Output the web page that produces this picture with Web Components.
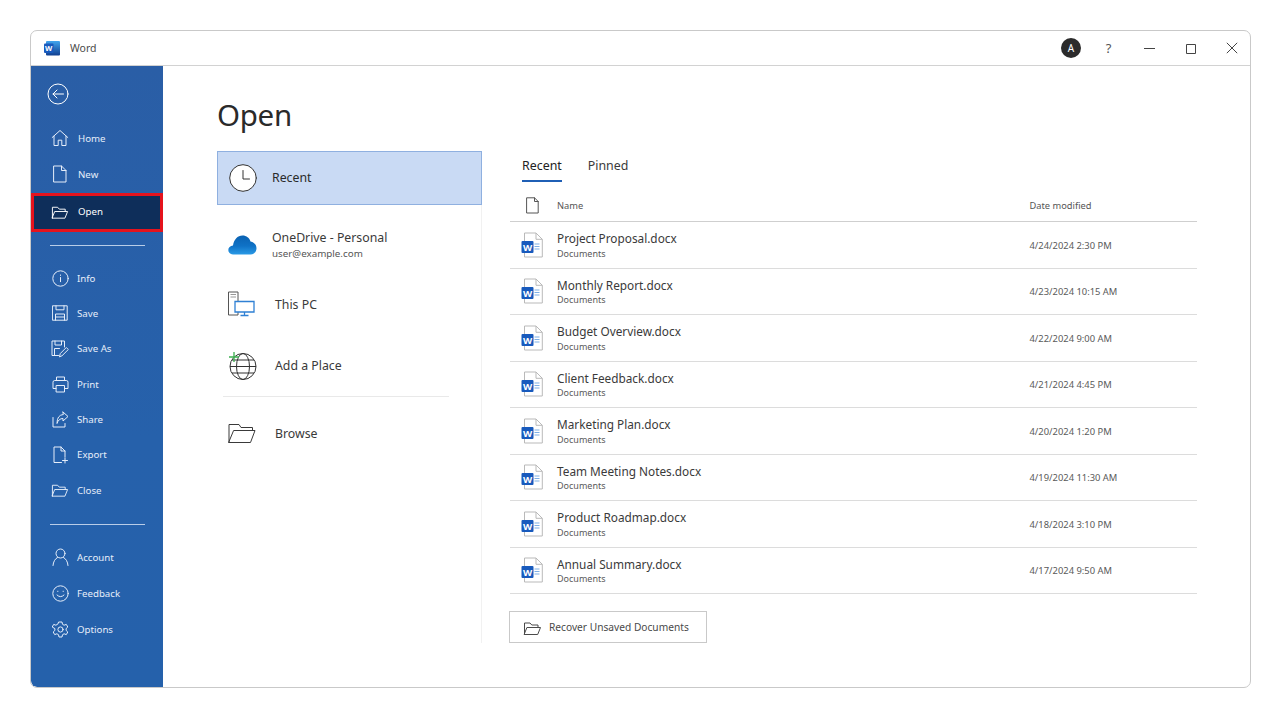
<!DOCTYPE html>
<html lang="en"><head><meta charset="utf-8"><title>Word - Open</title>
<style>
html,body{margin:0;padding:0;background:#fff;height:100%;overflow:hidden}
body{font-family:"Noto Sans","Open Sans",sans-serif;color:#222;padding:30px 30px 0 30px;box-sizing:border-box}
</style></head><body>
<word-window>
  <title-bar slot="top"></title-bar>
  <side-nav slot="side">
    <nav-item icon="home">Home</nav-item>
    <nav-item icon="new">New</nav-item>
    <nav-item icon="folder" active>Open</nav-item>
    <nav-rule></nav-rule>
    <nav-item icon="info" tight>Info</nav-item>
    <nav-item icon="save" tight>Save</nav-item>
    <nav-item icon="saveas" tight>Save As</nav-item>
    <nav-item icon="print" tight>Print</nav-item>
    <nav-item icon="share" tight>Share</nav-item>
    <nav-item icon="export" tight>Export</nav-item>
    <nav-item icon="folder" tight>Close</nav-item>
    <nav-rule style="margin-top:16px"></nav-rule>
    <nav-item icon="account" tight2>Account</nav-item>
    <nav-item icon="smile" tight2>Feedback</nav-item>
    <nav-item icon="gear" tight2>Options</nav-item>
  </side-nav>
  <open-pane slot="main">
    <place-list slot="places">
      <place-item icon="clock" selected>Recent</place-item>
      <place-item icon="cloud" sub="user@example.com" style="height:78px;padding-top:1px">OneDrive - Personal</place-item>
      <place-item icon="pc" shift style="height:42px">This PC</place-item>
      <place-item icon="globe" shift style="height:71px;padding-top:10px">Add a Place</place-item>
      <place-rule></place-rule>
      <place-item icon="browse" shift style="height:72px">Browse</place-item>
    </place-list>
    <file-panel slot="files">
      <file-row name="Project Proposal.docx" date="4/24/2024 2:30 PM"></file-row>
      <file-row name="Monthly Report.docx" date="4/23/2024 10:15 AM"></file-row>
      <file-row name="Budget Overview.docx" date="4/22/2024 9:00 AM"></file-row>
      <file-row name="Client Feedback.docx" date="4/21/2024 4:45 PM"></file-row>
      <file-row name="Marketing Plan.docx" date="4/20/2024 1:20 PM"></file-row>
      <file-row name="Team Meeting Notes.docx" date="4/19/2024 11:30 AM"></file-row>
      <file-row name="Product Roadmap.docx" date="4/18/2024 3:10 PM"></file-row>
      <file-row name="Annual Summary.docx" date="4/17/2024 9:50 AM"></file-row>
    </file-panel>
  </open-pane>
</word-window>
<script>
const S=(w,h,vb,body)=>`<svg xmlns="http://www.w3.org/2000/svg" width="${w}" height="${h}" viewBox="${vb}" fill="none" stroke="currentColor" stroke-width="1" stroke-linecap="round" stroke-linejoin="round" aria-hidden="true">${body}</svg>`;
const folderP='<path d="M1.5 14.5V3h5.5l1.8 2H15v2.5"/><path d="M1.5 14.5h13.2l2.8-7H4.3z"/>';
const icons={
 back:S(22,22,'0 0 22 22','<circle cx="11" cy="11" r="10"/><path d="M16.5 11H6M10 7l-4 4 4 4"/>'),
 home:S(18,18,'0 0 18 18','<path d="M1.2 8.5 9 1.500l7.800 7"/><path d="M3 7.200V16.500h4.200v-5.300h3.600v5.300H15V7.200"/>'),
 new:S(16,18,'0 0 16 18','<path d="M2 1h7.500L14 5.500V17H2z"/><path d="M9.500 1v4.500H14"/>'),
 folder:S(18,16,'0 0 19 16',folderP),
 info:S(17,17,'0 0 17 17','<circle cx="8.500" cy="8.500" r="7.700"/><path d="M8.500 7.500v4.200M8.500 5v.4"/>'),
 save:S(16,16,'0 0 16 16','<path d="M.8.800h14.400v14.400H.8z"/><path d="M4 .8v4h8v-4M3.500 15.200V9h9v6.200M3.500 12h9"/>'),
 saveas:S(18,18,'0 0 18 18','<path d="M7.500 15.500H1V1h12.500v6"/><path d="M4 1v4h6.500V1M3.500 15V8.500h5"/><path d="M8.500 16.500l.8-3 6-6 2 2-6 6z"/>'),
 print:S(17,17,'0 0 17 17','<path d="M4.500 4.500V1h8v3.500"/><path d="M4 12.500H1V6.200Q1 4.500 2.700 4.500h11.600Q16 4.500 16 6.200v6.300h-3"/><path d="M4.500 9.500h8V16h-8z"/>'),
 share:S(17,17,'0 0 17 17','<path d="M1 6.500V16h12v-3.500"/><path d="M11 1l5 4.500L11 10V7.500Q6.500 7.500 5 12.500 5 4 11 3.500z"/>'),
 export:S(17,18,'0 0 17 18','<path d="M9.500 16.500H2V1h7l4 4v6"/><path d="M9 1v4h4"/><path d="M13 12v5M10.500 14.500h5"/>'),
 account:S(17,18,'0 0 17 18','<circle cx="8.500" cy="5.500" r="4.500"/><path d="M1 17.500Q1.500 11.500 5.500 9.500M16 17.500Q15.500 11.500 11.500 9.500"/>'),
 smile:S(17,17,'0 0 17 17','<circle cx="8.500" cy="8.500" r="7.700"/><path d="M5 10q3.500 3.500 7 0"/><path d="M5.800 6.200v.3M11.200 6.200v.3"/>'),
 gear:S(17,17,'0 0 17 17','<circle cx="8.500" cy="8.500" r="2.600"/><path d="M7 1h3l.5 2.300 1.600.9 2.200-.8 1.500 2.600-1.700 1.600v1.800l1.700 1.600-1.500 2.600-2.200-.8-1.600.9L10 16H7l-.5-2.300-1.600-.9-2.200.8-1.500-2.600 1.700-1.600V7.600L.2 6l1.500-2.600 2.200.8 1.600-.9z"/>'),
 clock:S(28,28,'0 0 28 28','<circle cx="14" cy="14" r="13.300" fill="#fff" stroke="#333"/><path d="M14 6.500V15h6.500" stroke="#333"/>'),
 cloud:`<svg xmlns="http://www.w3.org/2000/svg" width="29" height="20" viewBox="0 0 29 20" aria-hidden="true"><defs><linearGradient id="cl" x1="0" y1="0" x2="0" y2="1"><stop offset="0" stop-color="#0a62b2"/><stop offset=".55" stop-color="#0f72c6"/><stop offset="1" stop-color="#2a9ae6"/></linearGradient></defs><path d="M5 19.500C2 19.500 .3 17.300.3 15 .3 12.500 2.300 10.500 5 10.400 6 4.500 9.500.5 14.500.5c4 0 7 2.500 8 6 3.500.5 6 3.300 6 6.700 0 3.500-2.500 6.300-6 6.300z" fill="url(#cl)"/></svg>`,
 pc:`<svg xmlns="http://www.w3.org/2000/svg" width="28" height="26" viewBox="0 0 28 26" fill="none" aria-hidden="true"><path d="M.5 1h9.500v23H.5z" stroke="#555" fill="#fff"/><path d="M2.500 3.500h5.500M2.500 6h5.500" stroke="#999"/><path d="M7 10.500h19V21H7z" stroke="#2f80d4" fill="#fff" stroke-width="1.300"/><path d="M16.500 21v3M12.500 24.500h8" stroke="#2f80d4" stroke-width="1.300"/></svg>`,
 globe:`<svg xmlns="http://www.w3.org/2000/svg" width="29" height="29" viewBox="0 0 29 29" fill="none" stroke="#333" aria-hidden="true"><circle cx="15" cy="15.500" r="13"/><ellipse cx="15" cy="15.500" rx="6.500" ry="13"/><path d="M2 15.500h26M4 9h22M4 22h22"/><path d="M6 1v10M1 6h10" stroke="#3cb050" stroke-width="1.300"/></svg>`,
 browse:S(28,20,'0 0 28 20','<path d="M1 19.500V1.500h10l2 3h11.500v3" stroke="#3a3a3a"/><path d="M1 19.500h21.500l4.500-12H6z" stroke="#3a3a3a"/>'),
 wordDoc:`<svg xmlns="http://www.w3.org/2000/svg" width="23" height="26" viewBox="0 0 23 26" aria-hidden="true"><path d="M3.500 1H15l6.300 6.300V25H3.500z" fill="#fff" stroke="#b9b9b9"/><path d="M15 1v6.300h6.300" fill="none" stroke="#b9b9b9"/><path d="M13.500 12h5M13.500 14.500h5M13.500 17h5" stroke="#7fb0e6" stroke-width="1.200"/><rect x=".5" y="9" width="12" height="12" rx="1" fill="#185abd"/><text x="6.500" y="18.500" text-anchor="middle" font-family="Noto Sans,sans-serif" font-weight="700" font-size="9.500" fill="#fff">W</text></svg>`,
 wordApp:`<svg xmlns="http://www.w3.org/2000/svg" width="16" height="16" viewBox="0 0 16 16" aria-hidden="true"><defs><linearGradient id="wa" x1="0" y1="0" x2="0" y2="1"><stop offset="0" stop-color="#41a5ee"/><stop offset="1" stop-color="#103f91"/></linearGradient></defs><rect x="2" y="1" width="14" height="14.500" rx="1" fill="url(#wa)"/><rect x="0" y="3.500" width="9.500" height="9.500" rx="1" fill="#185abd"/><text x="4.700" y="11" text-anchor="middle" font-family="Noto Sans,sans-serif" font-weight="700" font-size="7.500" fill="#fff">W</text></svg>`,
 fileHead:S(13,17,'0 0 13 17','<path d="M1 .8h7.500L12.200 4.500V16H1z"/><path d="M8.500.8v3.700h3.700"/>'),
 btnFolder:S(19,15,'0 0 19 15',folderP)
};
function def(name,css,html,extra){
  const t=document.createElement('template');
  t.innerHTML=`<style>${css}</style>${html}`;
  customElements.define(name,class extends HTMLElement{
    constructor(){super();this.attachShadow({mode:'open'}).appendChild(t.content.cloneNode(true));}
    connectedCallback(){extra&&extra.call(this,this.shadowRoot);}
  });
}
def('word-window',`:host{display:grid;grid-template-columns:132px 1fr;grid-template-rows:35px 1fr;width:1221px;height:658px;box-sizing:border-box;border:1px solid #c9c9c9;border-radius:7px;background:#fff;overflow:hidden}
.top{grid-column:1/3;display:block}`,`<div class="top"><slot name="top"></slot></div><slot name="side"></slot><slot name="main"></slot>`);
def('title-bar',`:host{display:flex;align-items:center;height:35px;box-sizing:border-box;border-bottom:1px solid #d2d2d2;padding-left:13px;color:#333;font-size:10.500px}
.name{margin-left:10px;color:#4a4a4a}.sp{flex:1}
.av{width:20px;height:20px;border-radius:50%;background:#2b2b2b;color:#fff;display:flex;align-items:center;justify-content:center;font-size:10px;margin-right:19px}
.q{font-size:13px;color:#555}
.b{width:41px;height:35px;display:flex;align-items:center;justify-content:center;color:#444}
.q{width:17px;margin-right:12px;text-align:center}`,
`<span class="ic"></span><span class="name">Word</span><span class="sp"></span><span class="av">A</span><span class="q">?</span>
<span class="b"><svg width="11" height="11" viewBox="0 0 11 11" stroke="currentColor" fill="none"><path d="M0 5.500h11"/></svg></span>
<span class="b"><svg width="11" height="11" viewBox="0 0 11 11" stroke="currentColor" fill="none"><path d="M1.500 1.500h9v9h-9z"/></svg></span>
<span class="b" style="margin-right:-2px"><svg width="12" height="12" viewBox="0 0 12 12" stroke="currentColor" fill="none"><path d="M.8.800l10.400 10.400M11.200.8.800 11.200"/></svg></span>`,
function(r){r.querySelector('.ic').innerHTML=icons.wordApp;r.querySelector('.ic').style.cssText='display:flex';});
def('side-nav',`:host{display:flex;flex-direction:column;background:linear-gradient(180deg,#2a5ea6,#2661ab 60%,#2561ab);color:#fff;min-height:0;padding-top:17px;box-sizing:border-box;border-bottom-left-radius:6px}
.back{display:flex;padding-left:16px;height:37px;box-sizing:border-box}`,`<div class="back"></div><slot></slot>`,
function(r){r.querySelector('.back').innerHTML=icons.back;});
def('nav-item',`:host{display:flex;align-items:center;height:36px;padding-left:20px;box-sizing:border-box;font-size:9.700px;color:#e6eefa;white-space:nowrap}
:host([tight]){height:35.340px}
:host([tight]) .i,:host([tight2]) .i{margin-right:8px}
:host([active]){height:39px;background:#0e2e5a;border:3px solid #e5131d;padding:0 0 2px 17px;margin:1px 0 0;color:#fff}
.i{width:18px;height:18px;display:flex;align-items:center;justify-content:center;margin-right:9px;flex:none}`,`<span class="i"></span><slot></slot>`,
function(r){r.querySelector('.i').innerHTML=icons[this.getAttribute('icon')]||'';});
def('nav-rule',`:host{display:block;height:1px;background:#b9cde8;margin:13px 18px 14.500px 19px}`,``);
def('open-pane',`:host{display:block;padding:0 0 0 54px;min-width:0}
h1{font:400 29.500px/1 "Noto Sans",sans-serif;color:#2a2a2a;margin:0;padding-top:34px;height:51px;box-sizing:content-box;letter-spacing:-.3px}
.cols{display:flex}
.l{width:265px;flex:none;box-sizing:border-box;border-right:1px solid #f1f1f1;height:492px}
.r{flex:1;padding-left:28px}`,`<h1>Open</h1><div class="cols"><div class="l"><slot name="places"></slot></div><div class="r"><slot name="files"></slot></div></div>`);
def('place-list',`:host{display:block}`,`<slot></slot>`);
def('place-item',`:host{display:flex;align-items:center;height:54px;width:265px;box-sizing:border-box;padding-left:10px;font-size:12.300px;color:#3a3a3a}
:host([selected]){background:#c9daf4;border:1px solid #8fb0e0;color:#2a2a2a;padding:0 0 1px 10px}
.i{width:30px;height:28px;display:flex;align-items:center;justify-content:center;margin-right:15px;flex:none}
:host([shift]) .i{margin-right:18px}
:host([selected]) .i{margin-right:14px}
.s{display:block;font-size:9.800px;color:#555;margin-top:0;line-height:15px}`,`<span class="i"></span><span class="t"><slot></slot><span class="s"></span></span>`,
function(r){r.querySelector('.i').innerHTML=icons[this.getAttribute('icon')];const s=this.getAttribute('sub');const e=r.querySelector('.s');if(s)e.textContent=s;else e.remove();});
def('place-rule',`:host{display:block;height:1px;background:#e9e9e9;width:226px;margin:0 0 0 6px}`,``);
def('file-panel',`:host{display:block}
.tabs{display:flex;gap:26px;padding:6px 0 0 12px;height:28px;font-size:12.400px;color:#3a3a3a;line-height:18px}
.tab{height:25px;box-sizing:border-box}
.on{border-bottom:2.500px solid #1f5fb5;color:#222}
.head{display:flex;align-items:center;height:34px;box-sizing:border-box;border-bottom:1px solid #cfcfcf;width:687px;font-size:9.300px;color:#555;padding-top:2px;margin-top:3px}
.hi{width:47px;padding-left:16px;box-sizing:border-box;display:flex;flex:none}
.n{flex:1}.d{width:167.500px}
.btn{display:flex;align-items:center;width:198px;height:32px;box-sizing:border-box;border:1px solid #c9c9c9;margin:17px 0 0 -1px;padding-left:13px;font-size:10.200px;color:#4a4a4a}
.btn .g{display:flex;width:19px}.btn .x{margin-left:7px}`,
`<div class="tabs"><span class="tab on">Recent</span><span class="tab">Pinned</span></div>
<div class="head"><span class="hi"></span><span class="n">Name</span><span class="d">Date modified</span></div>
<slot></slot>
<div class="btn"><span class="g"></span><span class="x">Recover Unsaved Documents</span></div>`,
function(r){r.querySelector('.hi').innerHTML=icons.fileHead;r.querySelector('.g').innerHTML=icons.btnFolder;});
def('file-row',`:host{display:flex;align-items:center;height:46.500px;width:687px;box-sizing:border-box;border-bottom:1px solid #dcdcdc}
.i{width:47px;padding-left:11px;box-sizing:border-box;flex:none;display:flex}
.n{flex:1;min-width:0;padding-top:1px}
.t{display:block;font-size:11.800px;color:#3a3a3a;line-height:15px}
.s{display:block;font-size:9px;color:#5a5a5a;line-height:13px;margin-top:.5px}
.d{width:167.500px;font-size:9.400px;color:#5a5a5a;padding-top:1px}`,
`<span class="i"></span><span class="n"><span class="t"></span><span class="s">Documents</span></span><span class="d"></span>`,
function(r){r.querySelector('.i').innerHTML=icons.wordDoc;r.querySelector('.t').textContent=this.getAttribute('name');r.querySelector('.d').textContent=this.getAttribute('date');});
</script>
</body></html>
